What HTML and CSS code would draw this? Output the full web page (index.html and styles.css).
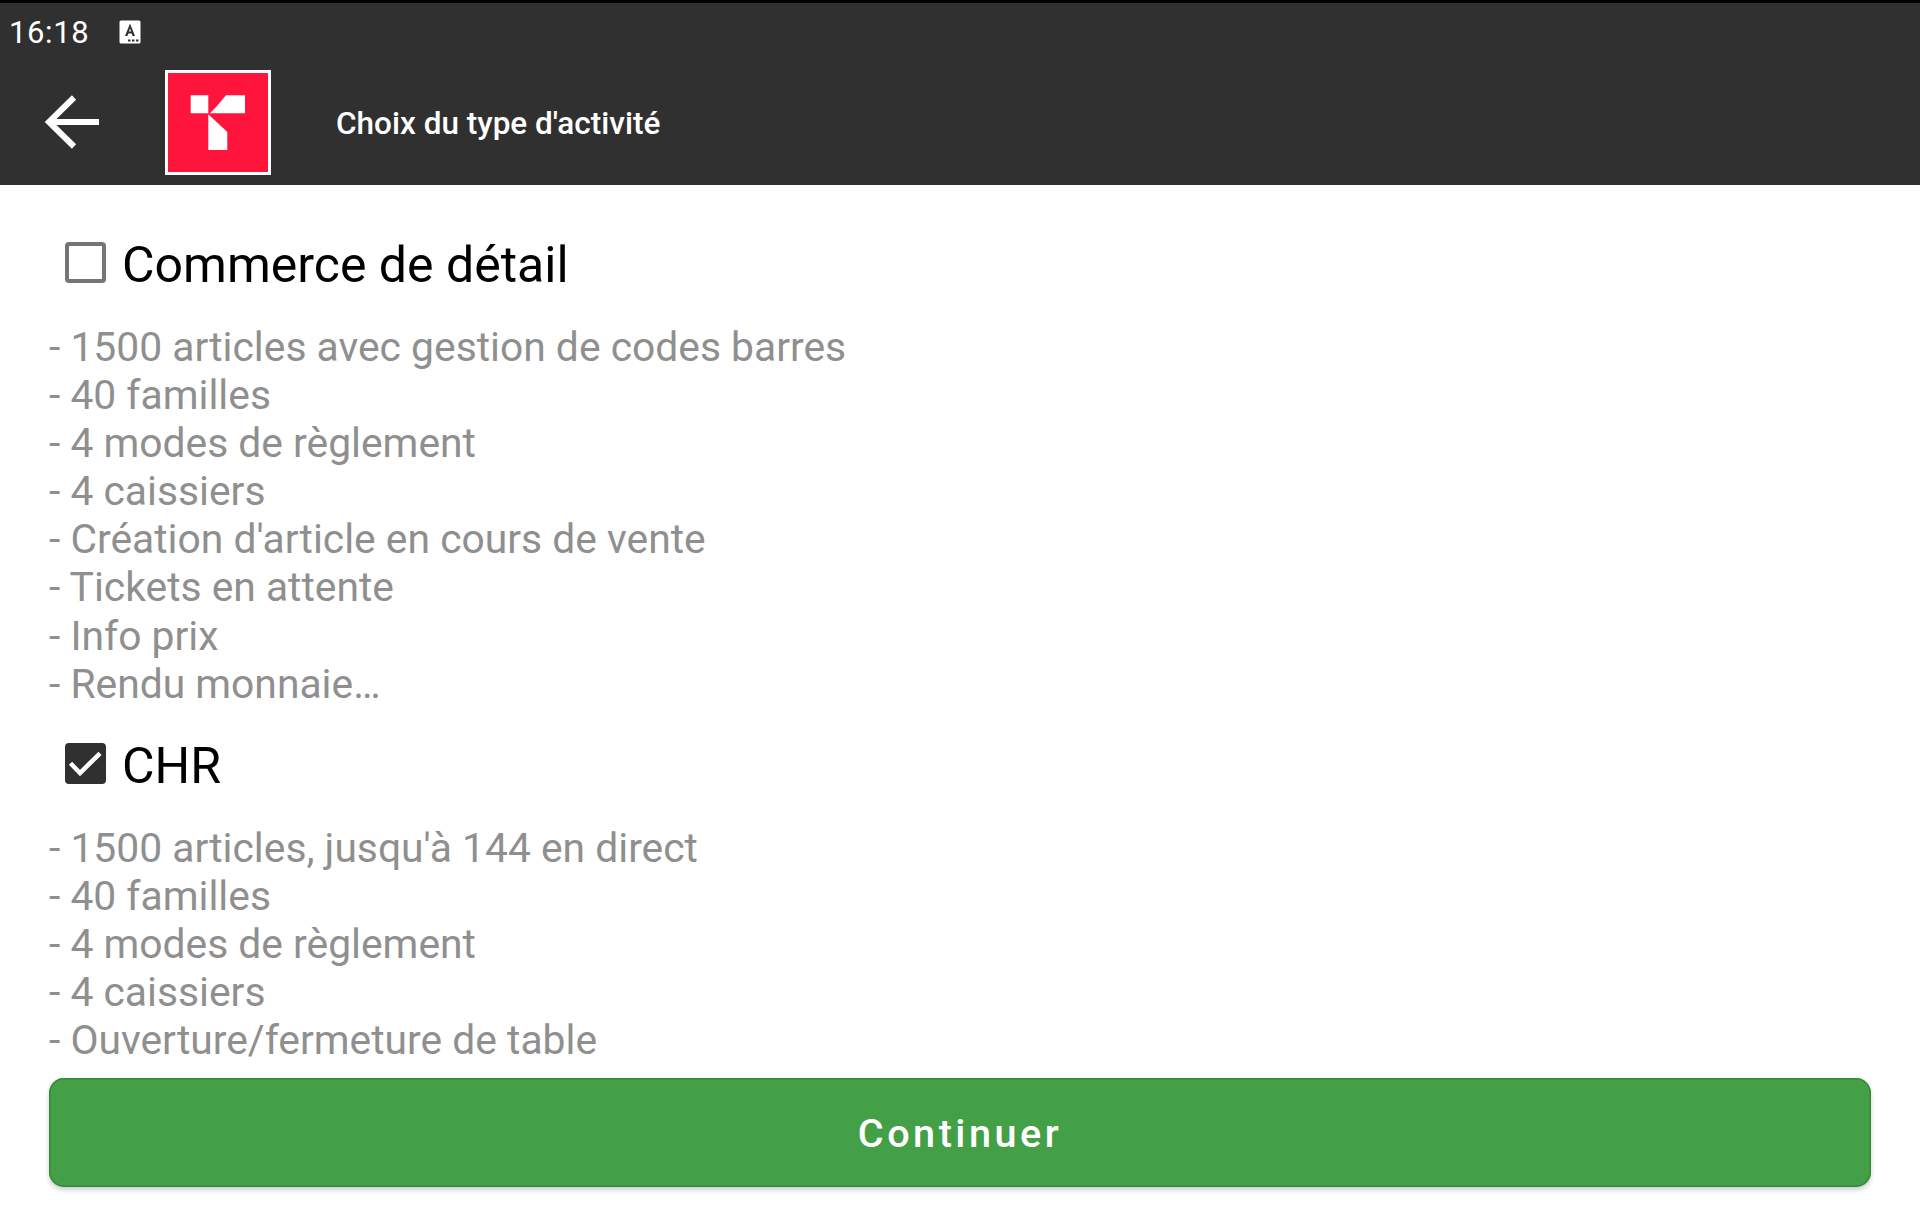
FILE: index.html
```html
<!DOCTYPE html>
<html lang="fr">
<head>
<meta charset="utf-8">
<title>Choix du type d'activité</title>
<link rel="stylesheet" href="styles.css">
</head>
<body>
<div class="app">
  <header class="topbar">
    <div class="status">
      <span class="clock">16:18</span>
      <svg class="status-icon" viewBox="0 0 22 24"><rect x="0.5" y="0.5" width="21" height="23" rx="1.5" fill="#fff"/><path d="M11 3.5 6 16H8.4L9.3 13.4H12.7L13.6 16H16ZM10 11.4 11 8.2 12 11.4Z" fill="#303030" fill-rule="evenodd"/><path d="M9 19.5h2.5v2H9ZM13 19.5h2.5v2H13ZM17 19.5h2.5v2H17Z" fill="#303030"/></svg>
    </div>
    <div class="toolbar">
      <svg class="back" viewBox="0 0 56 54"><path d="M55 27H6M30 2.500 5 27l25 24.500" fill="none" stroke="#fff" stroke-width="6"/></svg>
      <div class="logo"><svg viewBox="3 3 100 99"><path d="M25.700 25.300H43.300V43.300H25.700ZM45 43.300 52 36 61 25.300H80V43.300ZM43.300 44.300 62.300 62V80H43.300Z" fill="#fff"/></svg></div>
      <h1 class="title">Choix du type d'activité</h1>
    </div>
  </header>
  <main class="content">
    <section class="group">
      <label class="option"><span class="box"></span><span class="label-text">Commerce de détail</span></label>
      <ul class="features">
        <li>- 1500 articles avec gestion de codes barres</li>
        <li>- 40 familles</li>
        <li>- 4 modes de règlement</li>
        <li>- 4 caissiers</li>
        <li>- Création d'article en cours de vente</li>
        <li>- Tickets en attente</li>
        <li>- Info prix</li>
        <li>- Rendu monnaie…</li>
      </ul>
    </section>
    <section class="group last">
      <label class="option"><span class="box checked"><svg viewBox="0 0 41 41"><path d="M5.500 20.300 15 30 35 10.300" fill="none" stroke="#fff" stroke-width="4.500"/></svg></span><span class="label-text">CHR</span></label>
      <ul class="features">
        <li>- 1500 articles, jusqu'à 144 en direct</li>
        <li>- 40 familles</li>
        <li>- 4 modes de règlement</li>
        <li>- 4 caissiers</li>
        <li>- Ouverture/fermeture de table</li>
      </ul>
    </section>
    <button class="continue">Continuer</button>
  </main>
</div>
</body>
</html>
```
FILE: styles.css
```css
* { box-sizing: border-box; }
html, body { margin: 0; height: 100%; }
body { background: #fff; font-family: Roboto, sans-serif; }
.app { width: 1920px; height: 1209px; display: flex; flex-direction: column; overflow: hidden; }
.topbar { height: 185px; background: #303030; border-top: 3px solid #000; color: #fff; }
.status { height: 56px; display: flex; align-items: center; padding-left: 9px; gap: 30px; }
.clock { font-size: 31px; letter-spacing: 0.6px; padding-top: 2px; }
.status-icon { width: 22px; height: 24px; margin-top: 2px; }
.toolbar { height: 126px; display: flex; align-items: center; padding-left: 44px; }
.back { width: 56px; height: 54px; margin-right: 65px; }
.logo { width: 106px; height: 105px; background: #ff143c; border: 3px solid #fff; margin-right: 65px; }
.logo svg { display: block; width: 100%; height: 100%; }
.title { margin: 0; padding-top: 2px; font-size: 31.500px; font-weight: 500; }
.content { flex: 1; padding: 47px 49px 0; display: flex; flex-direction: column; }
.group { margin-bottom: 25px; }
.group.last { margin-bottom: 14px; }
.option { display: flex; align-items: center; height: 64px; padding-left: 16px; gap: 16px; font-size: 50px; color: #000; }
.label-text { padding-top: 2px; }
.box { width: 41px; height: 41px; border: 4px solid #757575; border-radius: 4px; display: block; margin-top: -3px; }
.box.checked { background: #303030; border-color: #303030; }
.box svg { display: block; width: 41px; height: 41px; margin: -4px; }
.features { list-style: none; margin: 27px 0 0; padding: 0; font-size: 40.800px; line-height: 48.100px; color: #8f8f8f; }
.continue { height: 109px; width: 1822px; background: #43a047; color: #fff; border: 0; border-radius: 15px; padding-top: 2px; font: 500 39.600px Roboto, sans-serif; letter-spacing: 3.500px; box-shadow: inset 0 0 0 1.500px rgba(46,125,50,.65), 0 3px 5px rgba(0,0,0,.2); }
```
